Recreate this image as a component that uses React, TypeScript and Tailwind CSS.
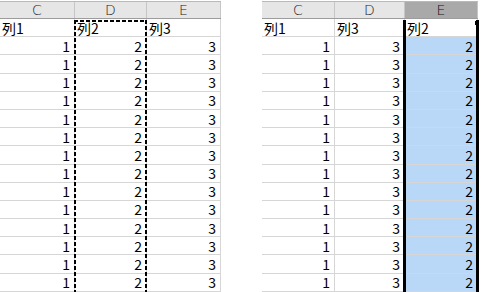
import React from "react";

type SheetProps = {
  cols: { letter: string; width: number; selected?: boolean }[];
  labels: string[];
  values: number[];
  highlight?: number;
  marquee?: number;
};

const DATA_ROWS = 14;
const ROW_H = "h-[18.2px]";

const Sheet = ({ cols, labels, values, highlight, marquee }: SheetProps) => {
  const template = cols.map((c) => `${c.width}px`).join(" ");

  return (
    <div className="relative shrink-0 mt-[1px]">
      {/* Column headers */}
      <div className="grid border-t border-[#b9b9b9] border-b border-b-[#9c9c9c] h-[18px]" style={{ gridTemplateColumns: template }}>
        {cols.map((c) => (
          <div
            key={c.letter}
            className={`flex items-center justify-center border-r border-[#c6c6c6] text-[14px] leading-none font-['DejaVu_Sans',sans-serif] font-light ${
              c.selected ? "bg-[#a9a9a9] text-[#111]" : "bg-[#e6e6e6] text-[#222]"
            }`}
          >
            {c.letter}
          </div>
        ))}
      </div>

      {/* Title row */}
      <div className="grid" style={{ gridTemplateColumns: template }}>
        {labels.map((l) => (
          <div
            key={l}
            className={`${ROW_H} flex items-center pl-[2px] border-r border-b border-[#d6d6d6] text-[14px] text-black font-['Noto_Sans_CJK_JP',sans-serif] leading-none`}
          >
            {l}
          </div>
        ))}
      </div>

      {/* Data rows */}
      {Array.from({ length: DATA_ROWS }).map((_, r) => (
        <div key={r} className="grid" style={{ gridTemplateColumns: template }}>
          {values.map((v, i) => (
            <div
              key={i}
              className={`${ROW_H} flex items-center justify-end pr-[4px] border-r border-b border-[#d6d6d6] text-[14px] text-black font-['Noto_Sans_CJK_JP',sans-serif] leading-none ${
                highlight === i ? "bg-[#b9d8f8]" : ""
              }`}
            >
              {v}
            </div>
          ))}
        </div>
      ))}

      {/* Copy marquee around a column */}
      {marquee !== undefined && (
        <div
          className="absolute top-[19px] bottom-0 pointer-events-none"
          style={{
            left: cols.slice(0, marquee).reduce((s, c) => s + c.width, 0) - 1,
            width: cols[marquee].width + 1,
          }}
        >
          <div className="absolute top-0 left-0 right-0 h-[2px] bg-[repeating-linear-gradient(to_right,#000_0_4px,transparent_4px_6px)]" />
          <div className="absolute top-0 bottom-0 left-0 w-[2px] bg-[repeating-linear-gradient(to_bottom,#000_0_4px,transparent_4px_6px)]" />
          <div className="absolute top-0 bottom-0 right-0 w-[2px] bg-[repeating-linear-gradient(to_bottom,#000_0_4px,transparent_4px_6px)]" />
        </div>
      )}

      {/* Selection border */}
      {highlight !== undefined && (
        <div
          className="absolute top-[19px] bottom-0 border-x-[3px] border-black pointer-events-none"
          style={{
            left: cols.slice(0, highlight).reduce((s, c) => s + c.width, 0) - 2,
            width: cols[highlight].width + 3,
          }}
        >
          <div className="absolute -right-[3px] top-[1px] w-[4px] h-[4px] bg-black" />
        </div>
      )}
    </div>
  );
};

export default function App() {
  return (
    <div className="w-[482px] h-[292px] bg-white overflow-hidden flex items-start">
      <Sheet
        cols={[
          { letter: "C", width: 75 },
          { letter: "D", width: 72 },
          { letter: "E", width: 74 },
        ]}
        labels={["列1", "列2", "列3"]}
        values={[1, 2, 3]}
        marquee={1}
      />
      <div className="w-[41px] shrink-0" />
      <Sheet
        cols={[
          { letter: "C", width: 73 },
          { letter: "D", width: 70 },
          { letter: "E", width: 73, selected: true },
        ]}
        labels={["列1", "列3", "列2"]}
        values={[1, 3, 2]}
        highlight={2}
      />
    </div>
  );
}
